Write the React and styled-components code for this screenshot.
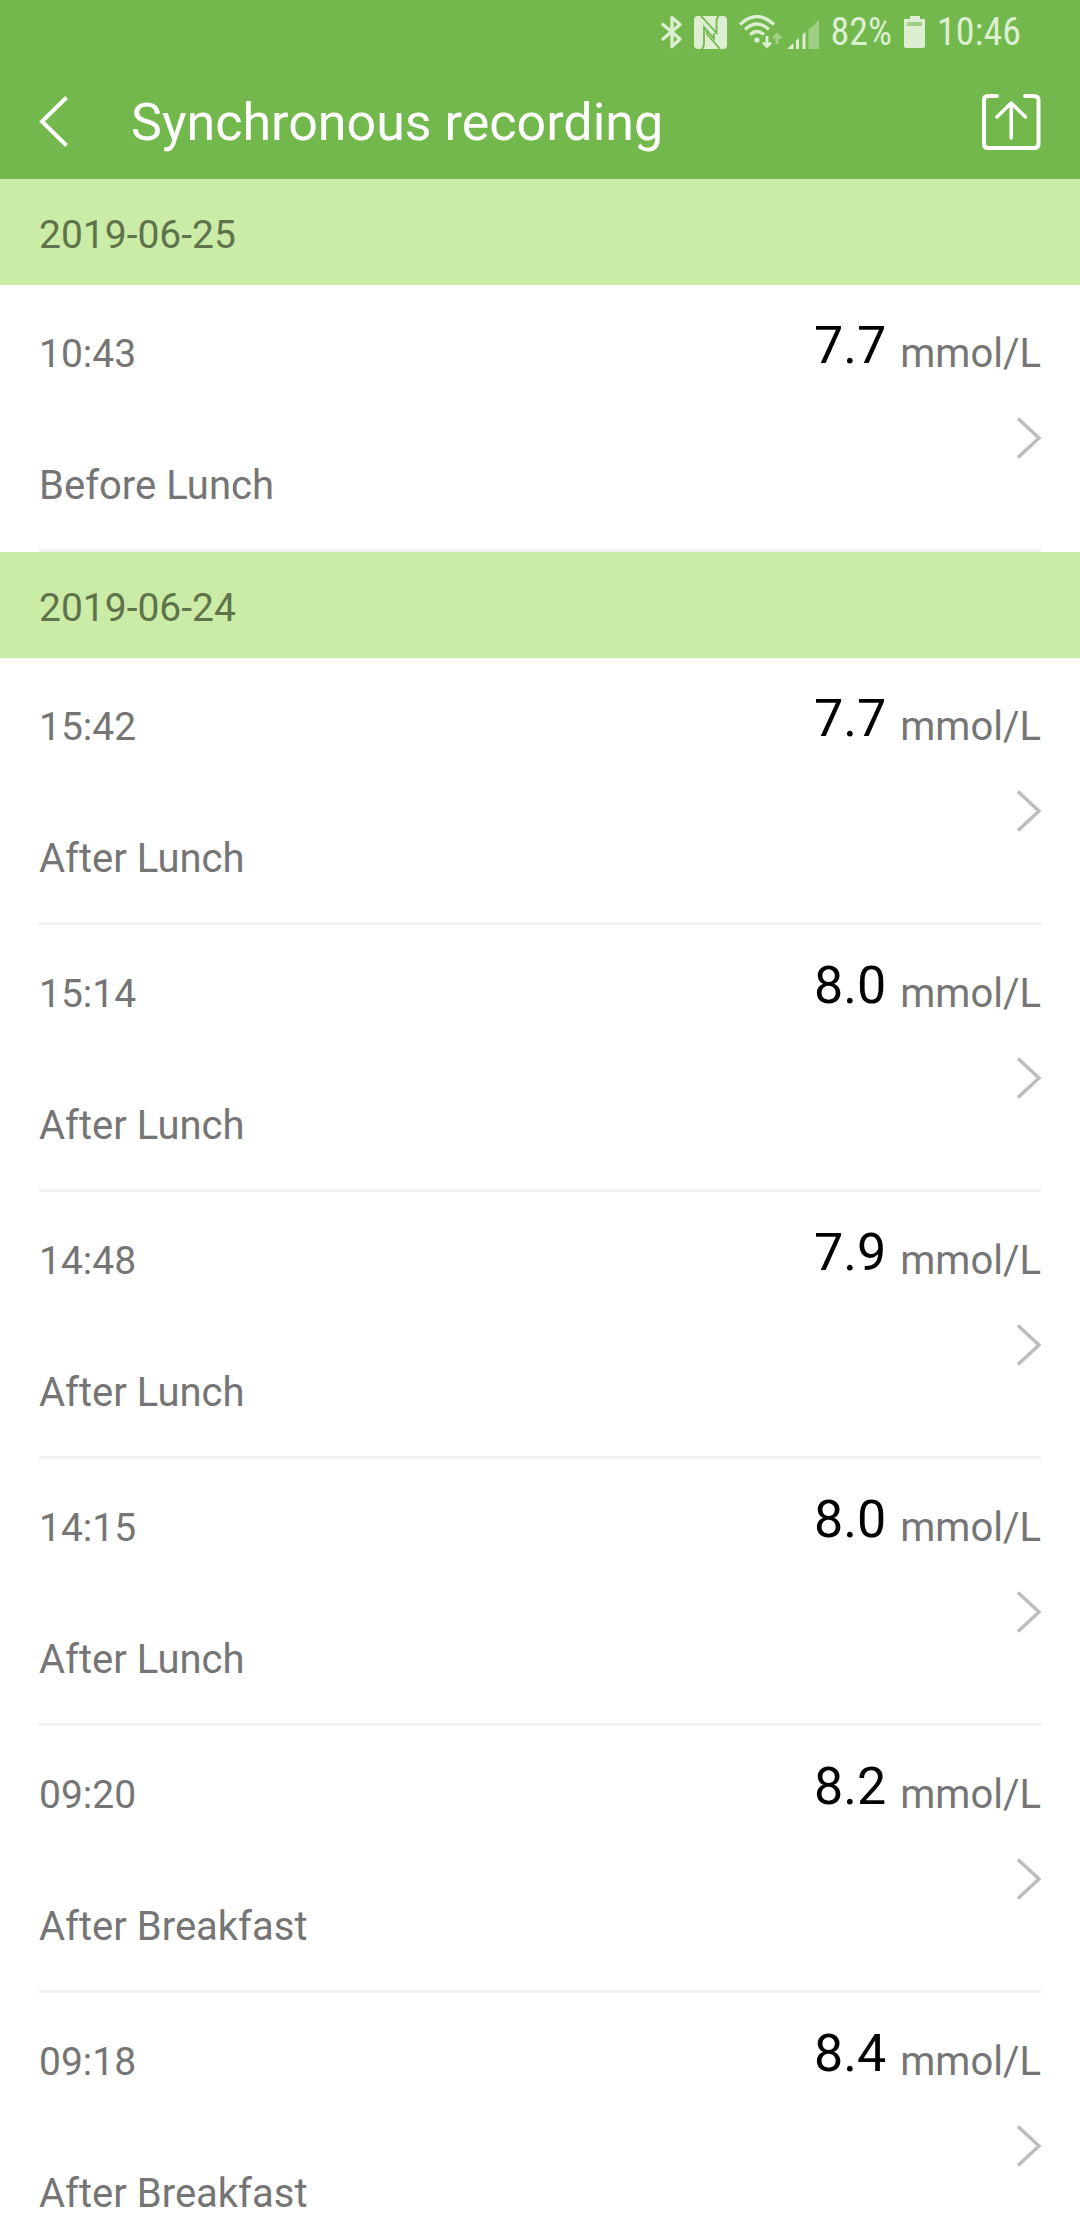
import React from "react";
import styled, { createGlobalStyle } from "styled-components";

const GlobalStyle = createGlobalStyle`
  *, *::before, *::after { box-sizing: border-box; }
  body {
    margin: 0;
    background: #ffffff;
    font-family: Roboto, "Noto Sans", sans-serif;
    color: #757575;
  }
`;

const Screen = styled.div`
  display: flex;
  flex-direction: column;
  height: 100vh;
  overflow: hidden;
`;

const Header = styled.header`
  flex: none;
  background: #73b84c;
  color: #ffffff;
`;

const StatusBar = styled.div`
  display: flex;
  align-items: center;
  justify-content: flex-end;
  height: 64px;
  padding-right: 59px;
  color: #dcefd1;
  font-family: "Roboto Condensed", Roboto, sans-serif;
  font-size: 38px;
  line-height: 64px;
`;

const StatusIcons = styled.div`
  display: flex;
  align-items: center;
  gap: 12px;
  margin-right: 12px;
`;

const NetworkIcons = styled.div`
  display: flex;
  align-items: flex-end;
  gap: 5px;
`;

const BatteryIcon = styled.svg`
  margin: 0 12px;
`;

const Toolbar = styled.div`
  display: flex;
  align-items: center;
  height: 115px;
  padding: 0 39px;
`;

const IconButton = styled.button`
  display: flex;
  padding: 0;
  border: 0;
  background: none;
  color: inherit;
  cursor: pointer;
`;

const Title = styled.h1`
  flex: 1;
  margin: 0;
  padding: 2px 0 0 62px;
  font-size: 52px;
  font-weight: 400;
  line-height: 64px;
`;

const Records = styled.main`
  flex: 1;
  min-height: 0;
  overflow-y: auto;
  scrollbar-width: none;
`;

const DateHeading = styled.h2`
  margin: 0;
  padding: 32px 39px 26px;
  background: #cbeca7;
  color: #5f734b;
  font-size: 39px;
  font-weight: 400;
  line-height: 48px;
`;

const RecordList = styled.ul`
  margin: 0;
  padding: 0 39px;
  list-style: none;
`;

const RecordItem = styled.li`
  border-bottom: 3px solid #f2f2f2;
`;

const RecordButton = styled.button`
  display: flex;
  justify-content: space-between;
  align-items: flex-start;
  width: 100%;
  padding: 33px 0 39px;
  border: 0;
  background: none;
  color: inherit;
  font: inherit;
  font-size: 40px;
  line-height: 48px;
  text-align: left;
  cursor: pointer;
`;

const Details = styled.span`
  display: flex;
  flex-direction: column;
  gap: 84px;
  padding-top: 12px;
`;

const Time = styled.span`
  font-size: 39px;
`;

const Measurement = styled.span`
  display: flex;
  flex-direction: column;
  align-items: flex-end;
  gap: 39px;
`;

const Reading = styled.span`
  display: flex;
  align-items: flex-end;
  gap: 14px;
`;

const Value = styled.span`
  padding-bottom: 4px;
  color: #000000;
  font-size: 52px;
  line-height: 56px;
`;

const days = [
  {
    date: "2019-06-25",
    records: [{ time: "10:43", value: "7.7", meal: "Before Lunch" }],
  },
  {
    date: "2019-06-24",
    records: [
      { time: "15:42", value: "7.7", meal: "After Lunch" },
      { time: "15:14", value: "8.0", meal: "After Lunch" },
      { time: "14:48", value: "7.9", meal: "After Lunch" },
      { time: "14:15", value: "8.0", meal: "After Lunch" },
      { time: "09:20", value: "8.2", meal: "After Breakfast" },
      { time: "09:18", value: "8.4", meal: "After Breakfast" },
    ],
  },
];

function Bluetooth() {
  return (
    <svg width="21" height="34" viewBox="0 0 21 34" fill="none" stroke="currentColor" strokeWidth="3.4" strokeLinejoin="round" strokeLinecap="round" aria-label="Bluetooth">
      <path d="M2 9.5 19 24 11 31.500V2.500L19 9.500 2 24" />
    </svg>
  );
}

function Nfc() {
  return (
    <svg width="33" height="33" viewBox="0 0 33 33" aria-label="NFC">
      <rect width="33" height="33" rx="4" fill="currentColor" />
      <g fill="none" stroke="#73b84c" strokeWidth="1.8">
        <path d="M7 0 9.500 2.500 22.500 17V5Q22.500 1.500 25 0" />
        <path d="M7.500 33Q10 31.500 10 28V11L20 22.500V17" />
        <path d="M13 15V18L26 33" />
      </g>
    </svg>
  );
}

function Wifi() {
  return (
    <svg width="43" height="34" viewBox="0 0 43 34" fill="none" stroke="currentColor" strokeWidth="3.200" aria-label="Wi-Fi">
      <path d="M1 9.500Q18 -6.500 35 9.500M6 14.500Q18 3.500 30 14.500M11 19.500Q18 13.500 25 19.500" />
      <circle cx="18" cy="25" r="2.600" fill="currentColor" stroke="none" />
      <path strokeWidth="2.800" d="M28 21V31M24 27.500 28 31.500 32 27.500" />
      <path strokeWidth="2.800" opacity="0.450" d="M38 29V20M34 23.500 38 19.500 42 23.500" />
    </svg>
  );
}

function Signal() {
  return (
    <svg width="32" height="29" viewBox="0 0 32 29" fill="currentColor" aria-label="Mobile signal">
      <path d="M0 29 6.500 23V29ZM9 20.500 12 18V29H9ZM15.500 14.500 18.500 12V29H15.500Z" />
      <path opacity="0.400" d="M21.500 9.500 32 0V29H21.500Z" />
    </svg>
  );
}

function Battery() {
  return (
    <BatteryIcon width="21" height="32" viewBox="0 0 21 32" aria-label="Battery">
      <path fill="currentColor" d="M6 0H16V3H20Q21 3 21 4V30Q21 32 19 32H2Q0 32 0 30V4Q0 3 1 3H6Z" />
      <path fill="#9fce84" d="M3 6H18V10H3Z" />
    </BatteryIcon>
  );
}

function BackChevron() {
  return (
    <svg width="30" height="52" viewBox="0 0 30 52" fill="none" stroke="currentColor" strokeWidth="4" aria-hidden="true">
      <path d="M27.500 1.500 3 25.500 27.500 49.500" />
    </svg>
  );
}

function ShareIcon() {
  return (
    <svg width="62" height="56" viewBox="0 0 62 56" fill="none" stroke="currentColor" strokeWidth="4" strokeLinecap="round" strokeLinejoin="round" aria-hidden="true">
      <path d="M18 2H9Q5 2 5 6V50Q5 54 9 54H55Q59.500 54 59.500 50V6Q59.500 2 55 2H46" />
      <path strokeWidth="3.500" d="M32.200 44V9M18 23 32.200 9 46.500 23" />
    </svg>
  );
}

function RowChevron() {
  return (
    <svg width="24" height="42" viewBox="0 0 24 42" fill="none" stroke="#bdbdbd" strokeWidth="3.500" aria-hidden="true">
      <path d="M1 1.500 22 21 1 40.500" />
    </svg>
  );
}

export default function App() {
  return (
    <Screen>
      <GlobalStyle />
      <Header>
        <StatusBar>
          <StatusIcons>
            <Bluetooth />
            <Nfc />
            <NetworkIcons>
              <Wifi />
              <Signal />
            </NetworkIcons>
          </StatusIcons>
          <span>82%</span>
          <Battery />
          <span>10:46</span>
        </StatusBar>
        <Toolbar>
          <IconButton type="button" aria-label="Back">
            <BackChevron />
          </IconButton>
          <Title>Synchronous recording</Title>
          <IconButton type="button" aria-label="Share">
            <ShareIcon />
          </IconButton>
        </Toolbar>
      </Header>
      <Records>
        {days.map((day) => (
          <section key={day.date}>
            <DateHeading>{day.date}</DateHeading>
            <RecordList>
              {day.records.map((record) => (
                <RecordItem key={record.time}>
                  <RecordButton type="button">
                    <Details>
                      <Time>{record.time}</Time>
                      <span>{record.meal}</span>
                    </Details>
                    <Measurement>
                      <Reading>
                        <Value>{record.value}</Value>
                        <span>mmol/L</span>
                      </Reading>
                      <RowChevron />
                    </Measurement>
                  </RecordButton>
                </RecordItem>
              ))}
            </RecordList>
          </section>
        ))}
      </Records>
    </Screen>
  );
}
